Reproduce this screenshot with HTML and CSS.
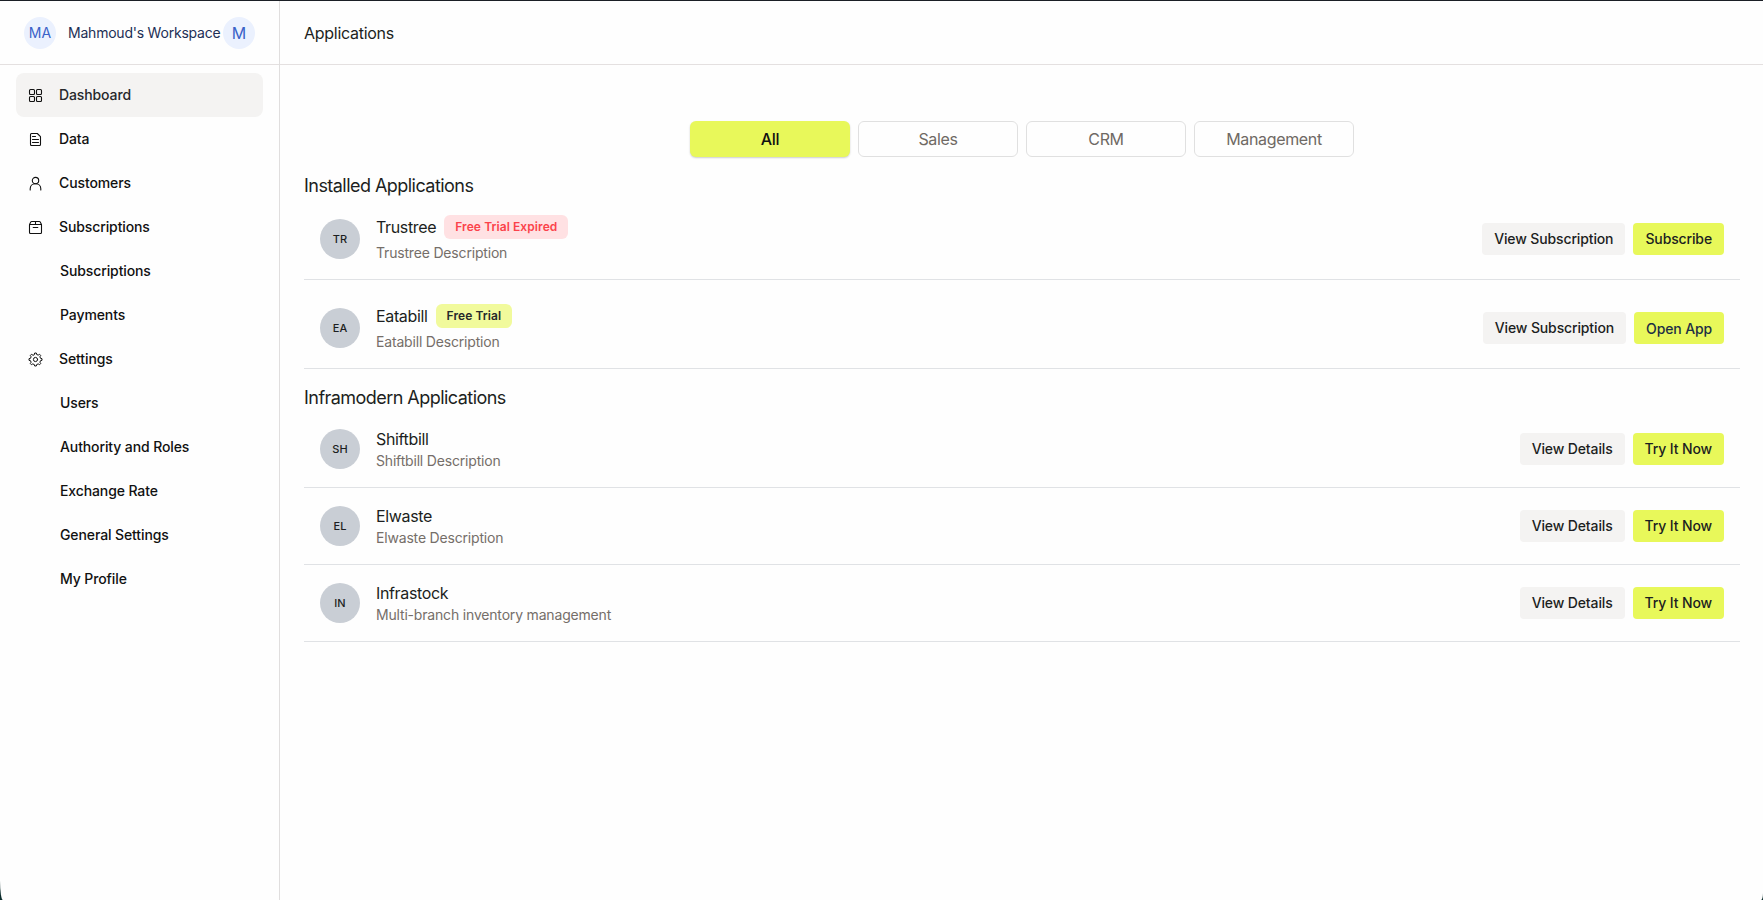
FILE: index.html
```html
<!DOCTYPE html>
<html lang="en">
<head>
    <meta charset="UTF-8">
    <meta name="viewport" content="width=device-width, initial-scale=1.0">
    <title>Applications</title>
    <link rel="stylesheet" href="styles.css">
</head>
<body>

    <div class="layout">
        <!-- Sidebar -->
        <aside class="sidebar">
            <div class="workspace">
                <span class="workspace-avatar">MA</span>
                <span class="workspace-name">Mahmoud's Workspace</span>
                <span class="workspace-avatar user">M</span>
            </div>

            <nav class="menu">
                <a class="menu-item active">
                    <svg class="icon" viewBox="0 0 15 15"><rect x="1.5" y="1.5" width="5" height="5" rx="1"/><rect x="8.5" y="1.5" width="5" height="5" rx="1"/><rect x="1.5" y="8.5" width="5" height="5" rx="1"/><rect x="8.5" y="8.5" width="5" height="5" rx="1"/></svg>
                    Dashboard
                </a>
                <a class="menu-item">
                    <svg class="icon" viewBox="0 0 15 15"><path d="M3.5 1.5h5.8l3.2 3.2v7.8a1 1 0 0 1-1 1h-8a1 1 0 0 1-1-1v-10a1 1 0 0 1 1-1zM4.5 4.5h3M4.5 7.5h6M4.5 10.5h6"/></svg>
                    Data
                </a>
                <a class="menu-item">
                    <svg class="icon" viewBox="0 0 15 15"><circle cx="7.5" cy="4.6" r="3.2"/><path d="M2.2 14v-1.2c0-2.9 2.2-5 5.3-5s5.3 2.1 5.3 5V14"/></svg>
                    Customers
                </a>
                <a class="menu-item">
                    <svg class="icon" viewBox="0 0 15 15"><path d="M1.5 4.5v8a1 1 0 0 0 1 1h10a1 1 0 0 0 1-1v-8l-1.3-2.5a1 1 0 0 0-.9-.5H3.7a1 1 0 0 0-.9.5L1.5 4.5h12M7.5 1.5v3M5.2 7.5h4.600"/></svg>
                    Subscriptions
                </a>
                <a class="menu-item sub">Subscriptions</a>
                <a class="menu-item sub">Payments</a>
                <a class="menu-item">
                    <svg class="icon thin" viewBox="0 0 15 15"><path d="M6.3 2.500 6.700 1h1.600l.4 1.500 1.500.6 1.400-.8 1.100 1.100-.8 1.400.6 1.500 1.500.4v1.600l-1.500.4-.6 1.500.8 1.400-1.100 1.100-1.400-.8-1.500.6L8.300 14H6.700l-.4-1.500-1.500-.6-1.400.8-1.100-1.100.8-1.400-.6-1.500L1 8.300V6.700l1.500-.4.6-1.500-.8-1.400 1.100-1.100 1.400.8z"/><circle cx="7.5" cy="7.5" r="2.1"/></svg>
                    Settings
                </a>
                <a class="menu-item sub">Users</a>
                <a class="menu-item sub">Authority and Roles</a>
                <a class="menu-item sub">Exchange Rate</a>
                <a class="menu-item sub">General Settings</a>
                <a class="menu-item sub">My Profile</a>
            </nav>
        </aside>

        <!-- Main content -->
        <main class="main">
            <header class="topbar">Applications</header>

            <div class="content">
                <div class="tabs">
                    <button class="tab active">All</button>
                    <button class="tab">Sales</button>
                    <button class="tab">CRM</button>
                    <button class="tab">Management</button>
                </div>

                <h2 class="section-title">Installed Applications</h2>
                <div class="app-list installed">
                    <div class="app">
                        <span class="app-avatar">TR</span>
                        <div class="app-info">
                            <div class="app-name">Trustree <span class="badge expired">Free Trial Expired</span></div>
                            <div class="app-desc">Trustree Description</div>
                        </div>
                        <button class="btn">View Subscription</button>
                        <button class="btn primary">Subscribe</button>
                    </div>
                    <div class="app">
                        <span class="app-avatar">EA</span>
                        <div class="app-info">
                            <div class="app-name">Eatabill <span class="badge">Free Trial</span></div>
                            <div class="app-desc">Eatabill Description</div>
                        </div>
                        <button class="btn">View Subscription</button>
                        <a class="btn primary link">Open App</a>
                    </div>
                </div>

                <h2 class="section-title">Inframodern Applications</h2>
                <div class="app-list">
                    <div class="app">
                        <span class="app-avatar">SH</span>
                        <div class="app-info">
                            <div class="app-name">Shiftbill</div>
                            <div class="app-desc">Shiftbill Description</div>
                        </div>
                        <button class="btn">View Details</button>
                        <button class="btn primary">Try It Now</button>
                    </div>
                    <div class="app">
                        <span class="app-avatar">EL</span>
                        <div class="app-info">
                            <div class="app-name">Elwaste</div>
                            <div class="app-desc">Elwaste Description</div>
                        </div>
                        <button class="btn">View Details</button>
                        <button class="btn primary">Try It Now</button>
                    </div>
                    <div class="app">
                        <span class="app-avatar">IN</span>
                        <div class="app-info">
                            <div class="app-name">Infrastock</div>
                            <div class="app-desc">Multi-branch inventory management</div>
                        </div>
                        <button class="btn">View Details</button>
                        <button class="btn primary">Try It Now</button>
                    </div>
                </div>
            </div>
        </main>
    </div>

</body>
</html>
```
FILE: styles.css
```css
* {
    box-sizing: border-box;
}

html {
    background: #0b2b2b;
}

body {
    margin: 0;
    font-family: Inter, "Liberation Sans", sans-serif;
    font-size: 14px;
    color: #1c1e21;
}

button {
    font-family: inherit;
}

.layout {
    display: flex;
    height: 100vh;
    overflow: hidden;
    background: #fefefe;
    border-top: 1px solid #1b1f26;
    border-radius: 0 0 2px 3px / 0 0 7px 20px;
}

/* Sidebar */
.sidebar {
    width: 280px;
    flex-shrink: 0;
    border-right: 1px solid #e0dede;
}

.workspace {
    display: flex;
    align-items: center;
    height: 64px;
    padding: 0 24px;
    border-bottom: 1px solid #e4e0e0;
}

.workspace-avatar {
    display: flex;
    align-items: center;
    justify-content: center;
    flex-shrink: 0;
    width: 32px;
    height: 32px;
    border-radius: 50%;
    background: #ebf1fe;
    color: #3a62c8;
    font-size: 14px;
}

.workspace-avatar.user {
    font-size: 16px;
}

.workspace-name {
    width: 167px;
    padding-left: 12px;
    white-space: nowrap;
    letter-spacing: -0.22px;
    color: #1d2f55;
}

.menu {
    padding: 8px 16px;
}

.menu-item {
    display: flex;
    align-items: center;
    height: 44px;
    padding-left: 12px;
    border-radius: 8px;
    font-weight: 500;
    line-height: 18px;
    letter-spacing: -0.11px;
    padding-bottom: 1px;
    color: #111;
}

.menu-item.active {
    background: #f4f3f2;
    color: #26282b;
}

.menu-item.sub {
    padding-left: 44px;
}

.icon {
    width: 15px;
    height: 15px;
    margin-top: 2px;
    margin-right: 16px;
    fill: none;
    stroke: #111;
    stroke-width: 1.1;
    stroke-linecap: round;
    stroke-linejoin: round;
}

.icon.thin {
    stroke-width: 1;
}

/* Main content */
.main {
    flex: 1;
}

.topbar {
    display: flex;
    align-items: center;
    height: 64px;
    padding: 0 24px;
    border-bottom: 1px solid #e4e0e0;
    font-size: 16px;
    letter-spacing: -0.28px;
}

.content {
    padding: 56px 23px 0 24px;
}

.tabs {
    display: flex;
    justify-content: center;
    gap: 8px;
    margin-bottom: 14px;
}

.tab {
    width: 160px;
    height: 36px;
    padding: 0;
    border: 1px solid #e0e0e0;
    border-radius: 6px;
    background: #fefefe;
    color: #6f6964;
    font-size: 16px;
    letter-spacing: -0.35px;
}

.tab.active {
    border: none;
    background: #e8f85a;
    color: #111;
    font-weight: 500;
    box-shadow: 0 1px 2px rgba(0, 0, 0, 0.2);
}

.section-title {
    margin: 0;
    padding-top: 2px;
    font-size: 18px;
    font-weight: 400;
    line-height: 26px;
    letter-spacing: -0.54px;
}

.app-list {
    margin-bottom: 14px;
}

.app {
    display: flex;
    align-items: center;
    gap: 8px;
    padding: 16px;
    border-bottom: 1px solid #e0e2e5;
}

.installed .app + .app {
    margin-top: 8px;
}

.app-avatar {
    display: flex;
    align-items: center;
    justify-content: center;
    width: 40px;
    height: 40px;
    margin-right: 8px;
    border-radius: 50%;
    background: #c9ced5;
    font-size: 11px;
    font-weight: 500;
}

.app-info {
    flex: 1;
}

.app-name {
    display: flex;
    align-items: center;
    gap: 8px;
    font-size: 16px;
    line-height: 24px;
    letter-spacing: -0.35px;
}

.app-desc {
    color: #756e69;
    line-height: 20px;
    letter-spacing: -0.18px;
}

.installed .app-desc {
    margin-top: 4px;
}

.badge {
    height: 24px;
    padding: 0 11px;
    border-radius: 6px;
    background: #f1fa9c;
    color: #26282b;
    font-size: 12px;
    font-weight: 600;
    letter-spacing: 0.09px;
}

.badge.expired {
    background: #ffe1e3;
    color: #fb434b;
}

.btn {
    height: 32px;
    padding: 0 12px;
    border: none;
    border-radius: 4px;
    background: #f4f3f2;
    color: #1c1e21;
    font-size: 14px;
    font-weight: 500;
    line-height: 32px;
    letter-spacing: -0.13px;
}

.btn.primary {
    background: #e8f85a;
}

.btn.link {
    color: #1d2f45;
    line-height: 34px;
}
```
